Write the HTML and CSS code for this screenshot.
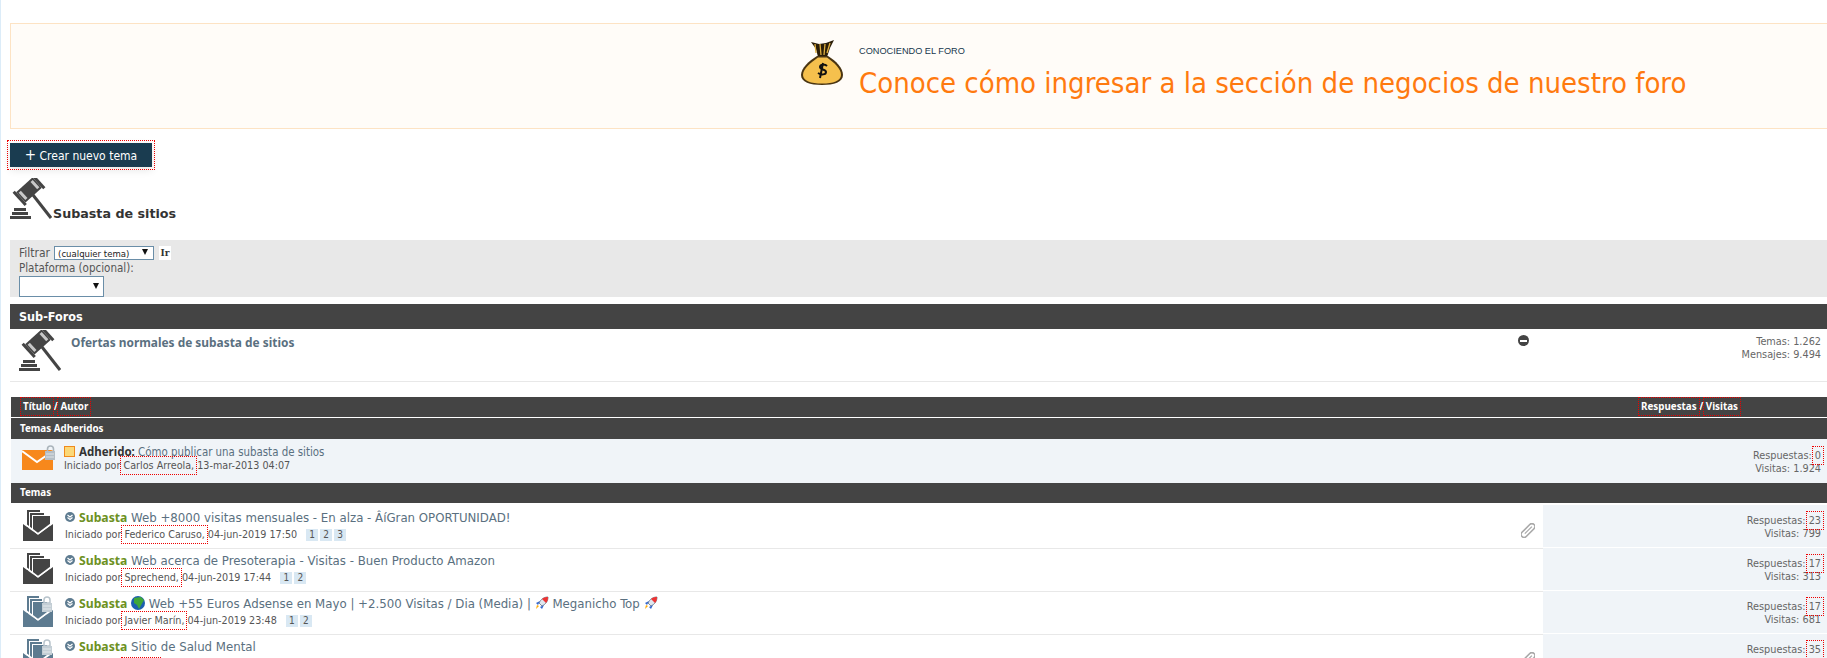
FILE: index.html
```html
<!DOCTYPE html>
<html lang="es">
<head>
    <meta charset="UTF-8">
    <title>Subasta de sitios</title>
    <link rel="stylesheet" href="styles.css">
</head>
<body>
    <svg class="defs" width="0" height="0">
        <defs>
            <symbol id="gavel" viewBox="0 0 42 42">
                <g transform="rotate(-42 19 12)">
                    <rect x="8" y="5" width="22" height="14" fill="#444"/>
                    <rect x="5" y="3" width="3" height="18" fill="#444"/>
                    <rect x="30" y="3" width="3" height="18" fill="#444"/>
                    <rect x="9.500" y="7" width="3" height="10" fill="#c8c8c8"/>
                    <rect x="25.500" y="7" width="3" height="10" fill="#c8c8c8"/>
                </g>
                <path d="M23 17 L41 40" stroke="#444" stroke-width="3"/>
                <path d="M4 30h12v3H4zM2 34h16v3H2zM0 38h21v3H0z" fill="#444"/>
            </symbol>
            <symbol id="mail-dark" viewBox="0 0 30 31">
                <path d="M4 0h13v2H6v16H4zM7 3h14v2H9v14H7z" fill="#444"/>
                <path d="M10 6h17v14l-8 5h-9z" fill="#444"/>
                <path d="M-1 12L15 24 31 12" fill="none" stroke="#fff" stroke-width="2"/>
                <path d="M0 14l15 11 15-11v17H0z" fill="#444"/>
            </symbol>
            <symbol id="mail-locked" viewBox="0 0 30 31">
                <path d="M4 0h12v2H6v16H4zM7 3h12v2H9v14H7z" fill="#5d7b90"/>
                <path d="M10 6h14v14l-5 5h-9z" fill="#5d7b90"/>
                <path d="M-1 12L15 24 31 12" fill="none" stroke="#fff" stroke-width="2"/>
                <path d="M0 14l15 11 15-11v17H0z" fill="#5d7b90"/>
                <path d="M21 4a3 3 0 0 1 6 0v3h-6z" fill="none" stroke="#b8c4cc" stroke-width="1.500"/>
                <rect x="19" y="7" width="10" height="9" fill="#c3ced5"/>
                <path d="M20 10h8M20 13h8" stroke="#e4e9ec"/>
            </symbol>
            <symbol id="dot" viewBox="0 0 10 10">
                <circle cx="5" cy="5" r="5" fill="#5d7b90"/>
                <path d="M2.500 3L5 5 7.500 3M2.500 5.500L5 7.500 7.500 5.500" stroke="#fff" stroke-width="1.200" fill="none"/>
            </symbol>
            <symbol id="rocket" viewBox="0 0 14 14">
                <path d="M13 1C9 1 6 3 4 7l3 3c4-2 6-5 6-9z" fill="#dfe6ee" stroke="#345" stroke-width=".6"/>
                <path d="M13 1C11 1 8.500 1.500 7 3l4 4c1.500-1.500 2-4 2-6z" fill="#e33"/>
                <path d="M5 5L1 7l2 2zM9 9l-2 4-2-2z" fill="#36c"/>
                <path d="M4 10l-3 3 1-4z" fill="#fa0"/>
            </symbol>
            <symbol id="clip" viewBox="0 0 14 15">
                <g transform="rotate(45 7 7.500)" fill="none" stroke="#a8a8a8">
                    <rect x="4" y="-1" width="6" height="17" rx="3" stroke-width="1.600"/>
                    <path d="M7 2v10" stroke-width="1.200"/>
                </g>
            </symbol>
        </defs>
    </svg>

    <div class="page">
        <div class="promo">
            <svg class="promo-bag" viewBox="0 0 42 46" width="42" height="46">
                <path d="M10 3l8 2 7-1 8-3-4 8-3 9H17l-2-8z" fill="#2a1d08"/>
                <path d="M14 5l1 9M19 5l1 11M24 5l-1 11M29 4l-3 10" stroke="#e0b040" stroke-width="1.300"/>
                <path d="M16 17h11c8 5 15 12 15 19 0 7-9 10-21 10S0 43 0 36c0-7 8-14 16-19z" fill="#4a3512"/>
                <path d="M17 18.500h9c7 5 14 11 14 17.500 0 6-8 8.500-19 8.500S2 42 2 36c0-6.500 8-12.500 15-17.500z" fill="#f5c04d"/>
                <path d="M26 27c-2-2-7-2-7 1 0 3 6 2 6 5 0 3-5 3-8 1M22 24l-3 15" stroke="#111" stroke-width="2" fill="none"/>
            </svg>
            <div class="promo-text">
                <div class="promo-kicker">CONOCIENDO EL FORO</div>
                <div class="promo-title">Conoce cómo ingresar a la sección de negocios de nuestro foro</div>
            </div>
        </div>

        <a class="new-topic"><span class="plus">+</span> Crear nuevo tema</a>

        <div class="forum-title">
            <svg class="gavel-big"><use href="#gavel"/></svg>
            <h1>Subasta de sitios</h1>
        </div>

        <div class="filters">
            <div class="filter-line">
                <span>Filtrar</span>
                <span class="fake-select small">(cualquier tema)<i class="arrow"></i></span>
                <span class="go">Ir</span>
            </div>
            <div class="filter-label">Plataforma (opcional):</div>
            <span class="fake-select big"><i class="arrow"></i></span>
        </div>

        <div class="subforos-head">Sub-Foros</div>
        <div class="subforo">
            <svg class="gavel-small"><use href="#gavel"/></svg>
            <a class="subforo-name">Ofertas normales de subasta de sitios</a>
            <span class="minus"></span>
            <div class="subforo-stats">Temas: 1.262<br>Mensajes: 9.494</div>
        </div>

        <div class="list">
            <div class="cols">
                <div><span class="dotted">Título</span> / <span class="dotted">Autor</span></div>
                <div class="cols-right"><span class="dotted">Respuestas</span> / <span class="dotted">Visitas</span></div>
            </div>
            <div class="section">Temas Adheridos</div>
            <div class="row sticky">
                <svg class="sticky-icon" viewBox="0 0 33 25" width="33" height="25">
                    <rect x="0" y="5" width="31" height="20" fill="#f7881c"/>
                    <path d="M0 6l15 11 16-11" fill="none" stroke="#fff" stroke-width="2"/>
                    <path d="M25.500 4a3 3 0 0 1 6 0v3h-6z" fill="none" stroke="#aab4bb" stroke-width="1.600"/>
                    <rect x="23" y="6" width="10" height="9" fill="#b4bdc4"/>
                    <path d="M24 9h8M24 12h8" stroke="#dde2e6"/>
                </svg>
                <div class="topic">
                    <div class="topic-title"><span class="note"></span><b class="adherido">Adherido:</b> <a>Cómo publicar una subasta de sitios</a></div>
                    <div class="topic-meta">Iniciado por <span class="dotted">Carlos Arreola,</span> 13-mar-2013 04:07</div>
                </div>
                <div class="stats plain">Respuestas: <span class="dotted">0</span><br>Visitas: 1.924</div>
            </div>
            <div class="section themes">Temas</div>

            <div class="row first">
                <div class="main">
                    <svg class="mail"><use href="#mail-dark"/></svg>
                    <div class="topic">
                        <div class="topic-title"><svg class="dot"><use href="#dot"/></svg><b class="tag">Subasta</b> <a>Web +8000 visitas mensuales - En alza - ÂíGran OPORTUNIDAD!</a></div>
                        <div class="topic-meta">Iniciado por <span class="dotted">Federico Caruso,</span> 04-jun-2019 17:50 <span class="pages"><i>1</i><i>2</i><i>3</i></span></div>
                    </div>
                    <svg class="clip"><use href="#clip"/></svg>
                </div>
                <div class="stats">Respuestas: <span class="dotted">23</span><br>Visitas: 799</div>
            </div>
            <div class="row">
                <div class="main">
                    <svg class="mail"><use href="#mail-dark"/></svg>
                    <div class="topic">
                        <div class="topic-title"><svg class="dot"><use href="#dot"/></svg><b class="tag">Subasta</b> <a>Web acerca de Presoterapia - Visitas - Buen Producto Amazon</a></div>
                        <div class="topic-meta">Iniciado por <span class="dotted">Sprechend,</span> 04-jun-2019 17:44 <span class="pages"><i>1</i><i>2</i></span></div>
                    </div>
                </div>
                <div class="stats">Respuestas: <span class="dotted">17</span><br>Visitas: 313</div>
            </div>
            <div class="row">
                <div class="main">
                    <svg class="mail"><use href="#mail-locked"/></svg>
                    <div class="topic">
                        <div class="topic-title"><svg class="dot"><use href="#dot"/></svg><b class="tag">Subasta</b> <svg class="globe" viewBox="0 0 14 14"><circle cx="7" cy="7" r="7" fill="#1c5fb0"/><path d="M3 2l7-1 3 3-5 9-2-4-3-2z" fill="#3fa63a"/></svg> <a>Web +55 Euros Adsense en Mayo | +2.500 Visitas / Dia (Media) | <svg class="rocket"><use href="#rocket"/></svg> Meganicho Top <svg class="rocket"><use href="#rocket"/></svg></a></div>
                        <div class="topic-meta">Iniciado por <span class="dotted">Javier Marín,</span> 04-jun-2019 23:48 <span class="pages"><i>1</i><i>2</i></span></div>
                    </div>
                </div>
                <div class="stats">Respuestas: <span class="dotted">17</span><br>Visitas: 681</div>
            </div>
            <div class="row">
                <div class="main">
                    <svg class="mail"><use href="#mail-locked"/></svg>
                    <div class="topic">
                        <div class="topic-title"><svg class="dot"><use href="#dot"/></svg><b class="tag">Subasta</b> <a>Sitio de Salud Mental</a></div>
                        <div class="meta-cut">
                            <span class="dotted author-cut"></span>
                            <span class="pages-cut"><i></i><i></i><i></i><i class="page-last"></i></span>
                        </div>
                    </div>
                    <svg class="clip"><use href="#clip"/></svg>
                </div>
                <div class="stats">Respuestas: <span class="dotted">35</span></div>
            </div>
        </div>
    </div>
</body>
</html>
```

FILE: styles.css
```css
html, body {
    margin: 0;
    height: 658px;
    overflow: hidden;
    background: #fff;
}
body {
    font-family: 'DejaVu Sans Condensed', 'DejaVu Sans', sans-serif;
    font-size: 11px;
    color: #555;
}
.defs {
    position: absolute;
}
.page {
    border-left: 1px solid #dcecf8;
    padding: 23px 0 0 9px;
    height: 635px;
    width: 1817px;
}
.dotted {
    outline: 1px dotted #e00;
    outline-offset: 2px;
}

/* banner */
.promo {
    display: flex;
    align-items: flex-start;
    height: 104px;
    margin-right: -20px;
    padding-left: 790px;
    background: #fffcf8;
    border: 1px solid #fde3c4;
}
.promo-bag {
    margin-top: 15px;
}
.promo-text {
    margin: 22px 0 0 16px;
}
.promo-kicker {
    font: 9.200px 'Liberation Sans', sans-serif;
    color: #17384d;
}
.promo-title {
    margin-top: 9px;
    font-size: 29px;
    line-height: 36px;
    color: #ff7a0f;
    white-space: nowrap;
}

/* boton */
.new-topic {
    display: block;
    width: 142px;
    height: 24px;
    margin-top: 14px;
    background: #1a3c50;
    color: #fff;
    font-size: 12px;
    line-height: 24px;
    text-align: center;
    outline: 1px dotted #e00;
    outline-offset: 2px;
    box-shadow: 0 3px 8px rgba(0, 0, 0, 0.1);
}
.plus {
    font-size: 15px;
}

.forum-title {
    display: flex;
    align-items: flex-end;
    margin-top: 10px;
    height: 43px;
}
.gavel-big {
    width: 42px;
    height: 42px;
}
.forum-title h1 {
    margin: 0 0 -3px 1px;
    font-family: 'DejaVu Sans', sans-serif;
    font-size: 12.700px;
    line-height: 18px;
    color: #333;
}

/* filtros */
.filters {
    margin-top: 20px;
    height: 57px;
    padding: 6px 0 0 9px;
    background: #e8e8e8;
    font-size: 12px;
    color: #555;
    box-sizing: border-box;
}
.filter-line {
    display: flex;
    align-items: center;
    height: 14px;
}
.filter-label {
    margin-top: 1px;
    font-size: 11.500px;
    line-height: 15px;
}
.fake-select {
    display: block;
    position: relative;
    box-sizing: border-box;
    background: #fff;
    border: 1px solid #6a8ea8;
    color: #222;
}
.fake-select.small {
    width: 100px;
    height: 14px;
    margin-left: 4px;
    font-size: 9.500px;
    line-height: 13px;
    padding-left: 3px;
}
.fake-select.big {
    width: 85px;
    height: 21px;
}
.arrow {
    position: absolute;
    right: 5px;
    top: 2px;
    border: 3.500px solid transparent;
    border-top: 6px solid #111;
    border-bottom: 0;
}
.big .arrow {
    right: 4px;
    top: 6px;
}
.go {
    margin-left: 5px;
    width: 12px;
    background: #fff;
    font: bold 9px 'DejaVu Serif', serif;
    line-height: 14px;
    text-align: center;
    color: #333;
}

/* sub foros */
.subforos-head {
    margin-top: 7px;
    height: 25px;
    padding-left: 9px;
    background: #444;
    color: #fff;
    font-weight: bold;
    font-size: 12.500px;
    line-height: 25px;
}
.subforo {
    display: flex;
    align-items: flex-start;
    height: 52px;
    padding: 0 6px 0 9px;
    border-bottom: 1px solid #e8e8e8;
}
.gavel-small {
    width: 42px;
    height: 42px;
    margin-top: 1px;
}
.subforo-name {
    flex: 1;
    margin: 5px 0 0 10px;
    font-family: 'Noto Sans', sans-serif;
    font-size: 11.900px;
    font-weight: bold;
    color: #5a7080;
}
.minus {
    display: flex;
    align-items: center;
    justify-content: center;
    width: 11px;
    height: 11px;
    margin: 6px 202px 0 0;
    border-radius: 50%;
    background: #444;
}
.minus::after {
    content: "";
    width: 7px;
    height: 2px;
    background: #fff;
}
.subforo-stats {
    width: 90px;
    margin-top: 6px;
    font-size: 10.800px;
    line-height: 13px;
    text-align: right;
    color: #666;
}

/* lista de temas */
.list {
    margin-top: 15px;
}
.cols {
    display: flex;
    justify-content: space-between;
    height: 20px;
    margin-left: 1px;
    padding-left: 12px;
    background: #444;
    color: #fff;
    font-family: 'Noto Sans', sans-serif;
    font-weight: bold;
    font-size: 9.800px;
    line-height: 20px;
}
.cols-right {
    margin-right: 89px;
}
.section {
    margin: 1px 0 0 1px;
    height: 21px;
    padding-left: 9px;
    background: #444;
    color: #fff;
    font-family: 'Noto Sans', sans-serif;
    font-weight: bold;
    font-size: 9.800px;
    line-height: 21px;
}
.section.themes {
    margin-top: 0;
    height: 20px;
    line-height: 20px;
}
.row {
    display: flex;
    height: 43px;
}
.row.first {
    margin-top: 3px;
}
.row.sticky {
    height: 44px;
    margin-left: 1px;
    padding-left: 11px;
    background: #f0f4f8;
}
.sticky-icon {
    margin: 6px 9px 0 0;
}
.main {
    display: flex;
    flex: 1;
    border-bottom: 1px solid #e8e8e8;
}
.mail {
    width: 30px;
    height: 31px;
    margin: 4px 12px 0 13px;
}
.topic {
    flex: 1;
    padding-top: 4px;
}
.row.sticky .topic {
    padding-top: 6px;
}
.topic-title {
    font-size: 13.100px;
    line-height: 16px;
    color: #5a7080;
    white-space: nowrap;
}
.sticky .topic-title {
    font-size: 11.400px;
    line-height: 14px;
}
.topic-title b {
    font-family: 'Noto Sans', sans-serif;
    font-size: 12.200px;
    font-weight: bold;
}
.sticky .topic-title b {
    font-size: 11.500px;
}
.adherido {
    color: #333;
}
.tag {
    color: #6d9122;
}
.note {
    display: inline-block;
    width: 9px;
    height: 9px;
    margin-right: 4px;
    background: #fbd878;
    border: 1px solid #f08a1c;
    vertical-align: -1px;
}
.dot {
    width: 10px;
    height: 10px;
    margin-right: 4px;
}
.globe, .rocket {
    width: 14px;
    height: 14px;
    vertical-align: -2px;
}
.topic-meta {
    margin-top: 2px;
    font-size: 10.700px;
    line-height: 14px;
    color: #555;
}
.sticky .topic-meta {
    margin-top: 0;
}
.pages {
    margin-left: 6px;
}
.pages i {
    display: inline-block;
    width: 12px;
    margin-right: 2px;
    background: #d9e8f3;
    font-style: normal;
    font-size: 10px;
    line-height: 12px;
    text-align: center;
}

/* ultima fila, cortada por el borde de la ventana */
.meta-cut {
    display: flex;
    margin-top: 2px;
}
.author-cut {
    width: 34px;
    height: 14px;
    margin: 3px 0 0 59px;
}
.pages-cut {
    display: flex;
    gap: 2px;
    margin: 2px 0 0 107px;
}
.pages-cut i {
    width: 12px;
    height: 12px;
    background: #d9e8f3;
}
.pages-cut .page-last {
    margin-left: 8px;
}

.clip {
    width: 14px;
    height: 15px;
    margin: 17px 8px 0 0;
}
.stats {
    width: 284px;
    margin: -1px 0 1px;
    padding: 9px 6px 0 0;
    background: #f0f4f8;
    border-bottom: 1px solid #fff;
    box-sizing: border-box;
    font-size: 10.800px;
    line-height: 13px;
    text-align: right;
    color: #666;
}
.stats.plain {
    margin: 0;
    padding-top: 10px;
    background: none;
    border: 0;
}
```
